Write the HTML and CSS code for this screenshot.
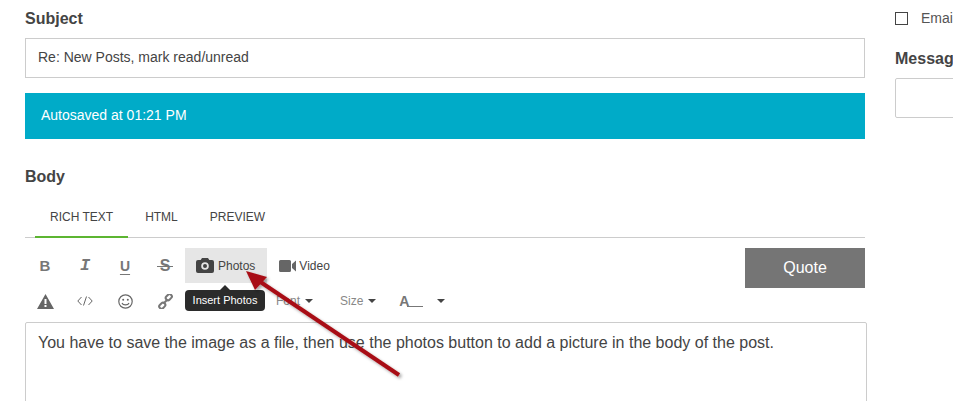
FILE: index.html
```html
<!DOCTYPE html>
<html lang="en">
<head>
  <meta charset="UTF-8">
  <title>Reply</title>
  <link rel="stylesheet" href="styles.css">
</head>
<body>
  <div class="page">
    <div class="main-col">
      <label class="field-label">Subject</label>
      <div class="subject-input">Re: New Posts, mark read/unread</div>
      <div class="autosave">Autosaved at 01:21 PM</div>
      <label class="field-label body-label">Body</label>

      <div class="tabs">
        <span class="tab active">RICH TEXT</span>
        <span class="tab">HTML</span>
        <span class="tab">PREVIEW</span>
      </div>

      <div class="toolbar">
        <div class="tool-rows">
          <div class="tool-row">
            <span class="tool fmt-b">B</span>
            <span class="tool fmt-i">I</span>
            <span class="tool fmt-u">U</span>
            <span class="tool fmt-s">S</span>
            <span class="media-btn hover">
              <svg width="18" height="15" viewBox="0 0 18 15"><path fill="#444" fill-rule="evenodd" d="M6 0h6l1.300 2H16a2 2 0 0 1 2 2v9a2 2 0 0 1-2 2H2a2 2 0 0 1-2-2V4a2 2 0 0 1 2-2h2.700zM9 4.200a3.800 3.800 0 1 0 0 7.600 3.800 3.800 0 0 0 0-7.600zm0 1.800a2 2 0 1 1 0 4 2 2 0 0 1 0-4z"/></svg>
              Photos
            </span>
            <span class="media-btn video-btn">
              <svg width="17" height="12" viewBox="0 0 17 12"><path fill="#666" d="M1.500 0h9A1.500 1.500 0 0 1 12 1.500v9a1.500 1.500 0 0 1-1.500 1.500h-9A1.500 1.500 0 0 1 0 10.500v-9A1.500 1.500 0 0 1 1.500 0zM13 4l4-3.500v11L13 8z"/></svg>
              Video
            </span>
          </div>
          <div class="tool-row second">
            <span class="tool">
              <svg width="17" height="15" viewBox="0 0 17 15"><path fill="#666" fill-rule="evenodd" d="M8.500 0 17 15H0zM7.500 5v5h2V5zm0 6v2h2v-2z"/></svg>
            </span>
            <span class="tool">
              <svg width="16" height="10" viewBox="0 0 16 10"><path fill="none" stroke="#666" d="M4.500 1 .8 5l3.700 4M11.500 1l3.700 4-3.700 4M9.500 .5l-3 9"/></svg>
            </span>
            <span class="tool">
              <svg width="15" height="15" viewBox="0 0 15 15"><circle cx="7.500" cy="7.500" r="6.700" fill="none" stroke="#666" stroke-width="1.200"/><circle cx="5.200" cy="5.800" r="1" fill="#666"/><circle cx="9.800" cy="5.800" r="1" fill="#666"/><path d="M4 9c1 2.500 6 2.500 7 0" fill="none" stroke="#666" stroke-width="1.200"/></svg>
            </span>
            <span class="tool">
              <svg width="15" height="15" viewBox="0 0 15 15"><g fill="none" stroke="#777" stroke-width="2"><rect x="7.500" y="1" width="6.500" height="4.500" rx="2" transform="rotate(-45 10.700 3.200)"/><rect x="1" y="9.500" width="6.500" height="4.500" rx="2" transform="rotate(-45 4.200 11.700)"/><path d="M5.500 9.500l4-4"/></g></svg>
            </span>
            <span class="drop font-drop">Font <i class="caret"></i></span>
            <span class="drop size-drop">Size <i class="caret"></i></span>
            <span class="drop"><b class="color-a">A</b><i class="color-line"></i><i class="caret"></i></span>
          </div>
        </div>
        <span class="quote-btn">Quote</span>
      </div>

      <div class="editor">You have to save the image as a file, then use the photos button to add a picture in the body of the post.</div>
    </div>

    <div class="side-col">
      <div class="email-row"><span class="checkbox"></span>Email</div>
      <label class="field-label">Message</label>
      <div class="icon-select"></div>
    </div>
  </div>

  <div class="tooltip">Insert Photos</div>

  <svg class="arrow" width="953" height="401" viewBox="0 0 953 401">
    <defs>
      <filter id="arrow-shadow" x="-20%" y="-20%" width="140%" height="140%">
        <feDropShadow dx="2" dy="2" stdDeviation="1.500" flood-color="#000" flood-opacity=".35"/>
      </filter>
    </defs>
    <g filter="url(#arrow-shadow)">
      <path d="M399 375 259 281" stroke="#a80f14" stroke-width="4" fill="none"/>
      <path d="M246 271 267 277 255 290z" fill="#a80f14"/>
    </g>
  </svg>
</body>
</html>
```

FILE: styles.css
```css
html, body { margin: 0; height: 401px; overflow: hidden; background: #fff; }
body { font-family: "Liberation Sans", Arial, sans-serif; color: #444; position: relative; }

.page { display: flex; align-items: flex-start; width: 953px; height: 401px; overflow: hidden; box-sizing: border-box; padding-left: 25px; }
.main-col { width: 840px; flex: none; padding-top: 10px; }
.side-col { width: 58px; flex: none; margin-left: 30px; padding-top: 10px; white-space: nowrap; overflow: hidden; }

.field-label { display: block; font-size: 16px; line-height: 18px; font-weight: bold; color: #444; }
.body-label { margin-top: 29px; }

.subject-input { height: 38px; margin-top: 10px; padding-left: 12px; line-height: 36px; font-size: 14px; color: #444; border: 1px solid #ccc; }
.autosave { height: 46px; margin-top: 15px; padding-left: 16px; line-height: 45px; font-size: 14px; color: #fff; background: #00abc8; }

.tabs { display: flex; align-items: flex-end; height: 45px; margin-top: 7px; padding-left: 10px; border-bottom: 1px solid #ccc; box-sizing: border-box; }
.tab { height: 44px; box-sizing: border-box; padding: 8px 15px 0; margin-right: 2px; font-size: 12px; line-height: 32px; color: #444; }
.tab.active { height: 45px; margin-bottom: -1px; border-bottom: 2px solid #5cb531; }

.toolbar { display: flex; justify-content: space-between; margin-top: 10px; height: 74px; }
.tool-row { display: flex; align-items: center; height: 35px; }
.tool-row.second { height: 36px; }
.tool { display: flex; justify-content: center; align-items: center; width: 40px; font-size: 15px; color: #777; }
.fmt-b { font-weight: bold; }
.fmt-i { font-family: "Liberation Mono", monospace; font-style: italic; font-weight: bold; font-size: 17px; }
.fmt-u { text-decoration: underline; text-underline-offset: 3px; font-weight: bold; font-size: 14px; }
.fmt-s { position: relative; font-size: 16px; font-weight: bold; }
.fmt-s::after { content: ""; position: absolute; left: 12px; top: 9px; width: 16px; height: 1px; background: #777; }

.media-btn { display: flex; align-items: center; gap: 4px; height: 35px; padding: 0 11px; font-size: 12px; color: #444; }
.media-btn.hover { padding-right: 12px; background: #e6e6e6; }
.video-btn { padding-left: 12px; gap: 3px; }

.drop { display: flex; align-items: center; font-size: 12px; color: #888; margin-right: 23px; }
.font-drop { margin-left: 91px; margin-right: 27px; }
.size-drop { margin-right: 23px; }
.caret { display: inline-block; width: 0; height: 0; margin-left: 5px; border: 4px solid transparent; border-top-color: #444; border-bottom: 0; }
.color-a { font-size: 14px; color: #777; }
.color-line { display: inline-block; width: 16px; height: 1px; background: #777; margin: 11px 9px 0 -2px; }

.quote-btn { width: 120px; height: 40px; line-height: 40px; text-align: center; font-size: 16px; color: #fff; background: #757575; }

.editor { width: 816px; height: 120px; padding: 10px 12px; font-size: 16px; line-height: 20px; color: #444; border: 1px solid #ccc; border-radius: 2px; }

.email-row { display: flex; align-items: center; height: 16px; font-size: 14px; color: #555; }
.checkbox { flex: none; width: 11px; height: 11px; margin-right: 13px; border: 1px solid #444; }
.side-col .field-label { margin-top: 24px; }
.icon-select { width: 200px; height: 38px; margin-top: 10px; border: 1px solid #ccc; border-radius: 2px; }

.tooltip { position: absolute; left: 185px; top: 290px; width: 80px; height: 21px; line-height: 21px; text-align: center; font-size: 11px; color: #fff; background: #2b2b2b; border-radius: 4px; }
.tooltip::before { content: ""; position: absolute; left: 35px; top: -5px; border: 5px solid transparent; border-top: 0; border-bottom-color: #2b2b2b; }

.arrow { position: absolute; left: 0; top: 0; pointer-events: none; }
```
